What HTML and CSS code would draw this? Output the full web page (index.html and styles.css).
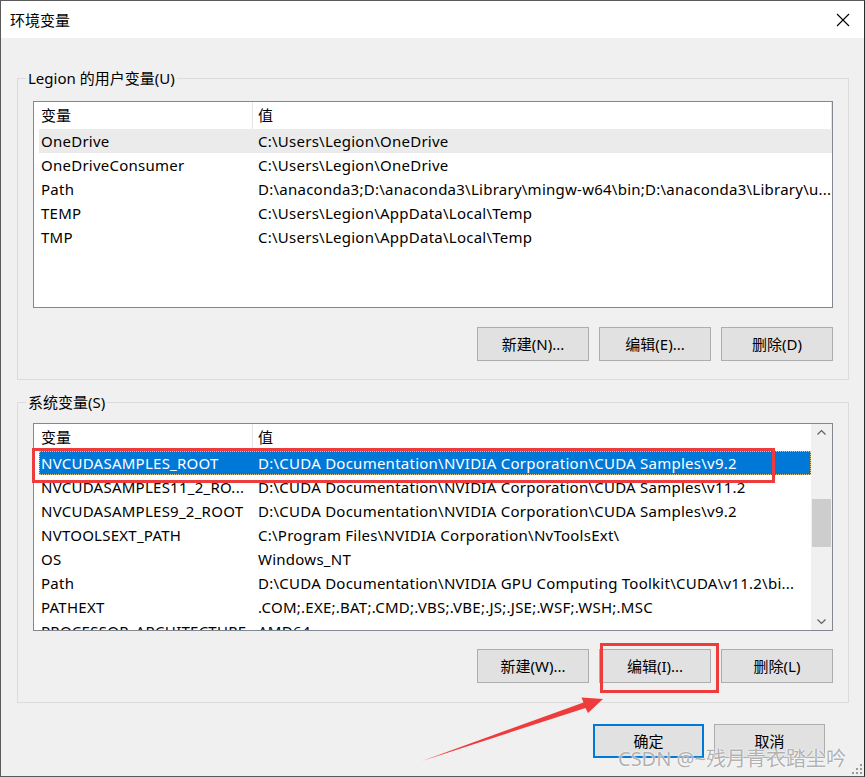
FILE: index.html
```html
<!DOCTYPE html>
<html lang="zh-CN">
<head>
<meta charset="utf-8">
<title>环境变量</title>
<link rel="stylesheet" href="styles.css">
</head>
<body>
<div class="window">
  <div class="titlebar">
    <span class="title">环境变量</span>
    <svg class="close" width="14" height="14" viewBox="0 0 14 14"><path d="M1 1 L13 13 M13 1 L1 13" stroke="#000" stroke-width="1.1" fill="none"/></svg>
  </div>
  <div class="client">
    <div class="group group-user">
      <span class="legend">Legion 的用户变量(U)</span>
      <div class="list list-user">
        <div class="list-body">
          <div class="row header"><span class="c1">变量</span><span class="c2">值</span></div>
          <div class="row hover"><span class="c1">OneDrive</span><span class="c2">C:\Users\Legion\OneDrive</span></div>
          <div class="row"><span class="c1">OneDriveConsumer</span><span class="c2">C:\Users\Legion\OneDrive</span></div>
          <div class="row"><span class="c1">Path</span><span class="c2">D:\anaconda3;D:\anaconda3\Library\mingw-w64\bin;D:\anaconda3\Library\u...</span></div>
          <div class="row"><span class="c1">TEMP</span><span class="c2">C:\Users\Legion\AppData\Local\Temp</span></div>
          <div class="row"><span class="c1">TMP</span><span class="c2">C:\Users\Legion\AppData\Local\Temp</span></div>
        </div>
      </div>
      <div class="buttons">
        <button class="btn">新建(N)...</button>
        <button class="btn">编辑(E)...</button>
        <button class="btn">删除(D)</button>
      </div>
    </div>

    <div class="group group-sys">
      <span class="legend">系统变量(S)</span>
      <div class="list list-sys">
        <div class="list-body">
          <div class="row header"><span class="c1">变量</span><span class="c2">值</span></div>
          <div class="row selected"><span class="c1">NVCUDASAMPLES_ROOT</span><span class="c2">D:\CUDA Documentation\NVIDIA Corporation\CUDA Samples\v9.2</span></div>
          <div class="row"><span class="c1">NVCUDASAMPLES11_2_RO...</span><span class="c2">D:\CUDA Documentation\NVIDIA Corporation\CUDA Samples\v11.2</span></div>
          <div class="row"><span class="c1">NVCUDASAMPLES9_2_ROOT</span><span class="c2">D:\CUDA Documentation\NVIDIA Corporation\CUDA Samples\v9.2</span></div>
          <div class="row"><span class="c1">NVTOOLSEXT_PATH</span><span class="c2">C:\Program Files\NVIDIA Corporation\NvToolsExt\</span></div>
          <div class="row"><span class="c1">OS</span><span class="c2">Windows_NT</span></div>
          <div class="row"><span class="c1">Path</span><span class="c2">D:\CUDA Documentation\NVIDIA GPU Computing Toolkit\CUDA\v11.2\bi...</span></div>
          <div class="row"><span class="c1">PATHEXT</span><span class="c2">.COM;.EXE;.BAT;.CMD;.VBS;.VBE;.JS;.JSE;.WSF;.WSH;.MSC</span></div>
          <div class="row"><span class="c1">PROCESSOR_ARCHITECTURE</span><span class="c2">AMD64</span></div>
        </div>
        <div class="scrollbar">
          <svg class="arrow" width="21" height="17" viewBox="0 0 21 17"><path d="M6.5 10.5 L10.5 6.5 L14.5 10.5" stroke="#606060" stroke-width="1.2" fill="none"/></svg>
          <div class="track"><div class="thumb"></div></div>
          <svg class="arrow" width="21" height="17" viewBox="0 0 21 17"><path d="M6.5 6.5 L10.5 10.5 L14.5 6.5" stroke="#606060" stroke-width="1.2" fill="none"/></svg>
        </div>
      </div>
      <div class="buttons">
        <button class="btn">新建(W)...</button>
        <button class="btn">编辑(I)...</button>
        <button class="btn">删除(L)</button>
      </div>
    </div>

    <div class="dialog-buttons">
      <button class="btn btn-default">确定</button>
      <button class="btn">取消</button>
    </div>
  </div>

  <div class="mark mark-row"></div>
  <div class="mark mark-edit"></div>
  <svg class="annot-arrow" width="865" height="777" viewBox="0 0 865 777">
    <polygon points="422,761 583.5,702.5 581.5,697.5 603,699 588,713 585.5,708" fill="#ee3b3b"/>
  </svg>
  <div class="watermark">CSDN @~残月青衣踏尘吟</div>
  <svg class="grip" width="14" height="14" viewBox="0 0 14 14">
    <rect x="10" y="2" width="2" height="2" fill="#9a9a9a"/>
    <rect x="6" y="6" width="2" height="2" fill="#9a9a9a"/>
    <rect x="10" y="6" width="2" height="2" fill="#9a9a9a"/>
    <rect x="2" y="10" width="2" height="2" fill="#9a9a9a"/>
    <rect x="6" y="10" width="2" height="2" fill="#9a9a9a"/>
    <rect x="10" y="10" width="2" height="2" fill="#9a9a9a"/>
  </svg>
</div>
</body>
</html>
```

FILE: styles.css
```css
* { box-sizing: border-box; }

html, body {
  margin: 0;
  padding: 0;
  background: #f0f0f0;
}

body {
  font-family: "Noto Sans", "Noto Sans CJK SC", sans-serif;
  font-size: 15px;
  color: #000;
}

.window {
  position: relative;
  width: 865px;
  height: 777px;
  border: 1px solid #5a5a5a;
  border-right-color: #2b2b2b;
  background: #f0f0f0;
  overflow: hidden;
}

.titlebar {
  height: 37px;
  background: #fff;
  display: flex;
  align-items: center;
  justify-content: space-between;
  padding: 0 14px 0 9px;
}

.title {
  font-family: "Noto Sans CJK SC", sans-serif;
  font-size: 15px;
  line-height: 20px;
}

.close { display: block; margin-top: 1px; }

.client {
  padding: 0 0 0 16px;
}

.group {
  position: relative;
  width: 832px;
  border: 1px solid #dcdcdc;
  padding: 22px 15px 18px 15px;
}

.group-user { margin-top: 40px; }
.group-sys { margin-top: 22px; padding: 20px 15px 19px 15px; }

.legend {
  position: absolute;
  top: -11px;
  left: 8px;
  padding: 0 2px;
  background: #f0f0f0;
  line-height: 20px;
  white-space: nowrap;
}

.list {
  display: flex;
  background: #fff;
  border: 1px solid #828790;
  overflow: hidden;
}

.list-user { height: 207px; }
.list-sys { height: 208px; }

.list-body {
  flex: 1;
  min-width: 0;
  padding-left: 5px;
  overflow: hidden;
}

.row {
  display: flex;
  height: 24px;
  line-height: 24px;
  white-space: nowrap;
  letter-spacing: 0.25px;
}

.row.header {
  height: 27px;
  line-height: 27px;
  letter-spacing: 0;
}

.c1 {
  width: 213px;
  flex: none;
  padding-left: 2px;
  overflow: hidden;
}

.c2 {
  flex: 1;
  min-width: 0;
  padding-left: 6px;
  overflow: hidden;
}

.header .c2 { border-left: 1px solid #e5e5e5; padding-left: 5px; }
.list-user .header .c2 { border-right: 1px solid #e5e5e5; }

.row.hover { background: #ebebeb; }

.row.selected {
  background: #0078d7;
  color: #fff;
  outline: 1px dotted #d9c98f;
  outline-offset: -1px;
}

.scrollbar {
  width: 21px;
  flex: none;
  background: #f0f0f0;
  display: flex;
  flex-direction: column;
}

.arrow { display: block; flex: none; }

.track {
  flex: 1;
  padding-top: 58px;
}

.thumb {
  margin: 0 1px;
  height: 48px;
  background: #cdcdcd;
}

.buttons {
  display: flex;
  justify-content: flex-end;
  gap: 10px;
  margin-top: 19px;
}

.group-sys .buttons { margin-top: 18px; }

.btn {
  width: 112px;
  height: 34px;
  background: #e1e1e1;
  border: 1px solid #adadad;
  font-family: "Noto Sans", "Noto Sans CJK SC", sans-serif;
  font-size: 15px;
  color: #000;
  padding: 0;
  line-height: 30px;
}

.dialog-buttons {
  display: flex;
  justify-content: flex-end;
  gap: 10px;
  margin-top: 21px;
  padding-right: 39px;
}

.dialog-buttons .btn { width: 111px; }

.btn-default {
  border: 2px solid #0078d7;
}

.mark {
  position: absolute;
  border: 3px solid #ee3b3b;
}

.mark-row { left: 31px; top: 447px; width: 743px; height: 35px; }
.mark-edit { left: 599px; top: 642px; width: 119px; height: 50px; }

.annot-arrow {
  position: absolute;
  left: -1px;
  top: -1px;
  pointer-events: none;
}

.watermark {
  position: absolute;
  left: 617px;
  top: 746px;
  font-family: "Noto Sans", "Noto Sans CJK SC", sans-serif;
  font-size: 20px;
  line-height: 24px;
  color: rgba(110, 110, 110, 0.55);
  text-shadow: 0 0 2px #fff, 0 0 1px #fff;
  white-space: nowrap;
}

.grip {
  position: absolute;
  right: 0;
  bottom: 0;
}
```
